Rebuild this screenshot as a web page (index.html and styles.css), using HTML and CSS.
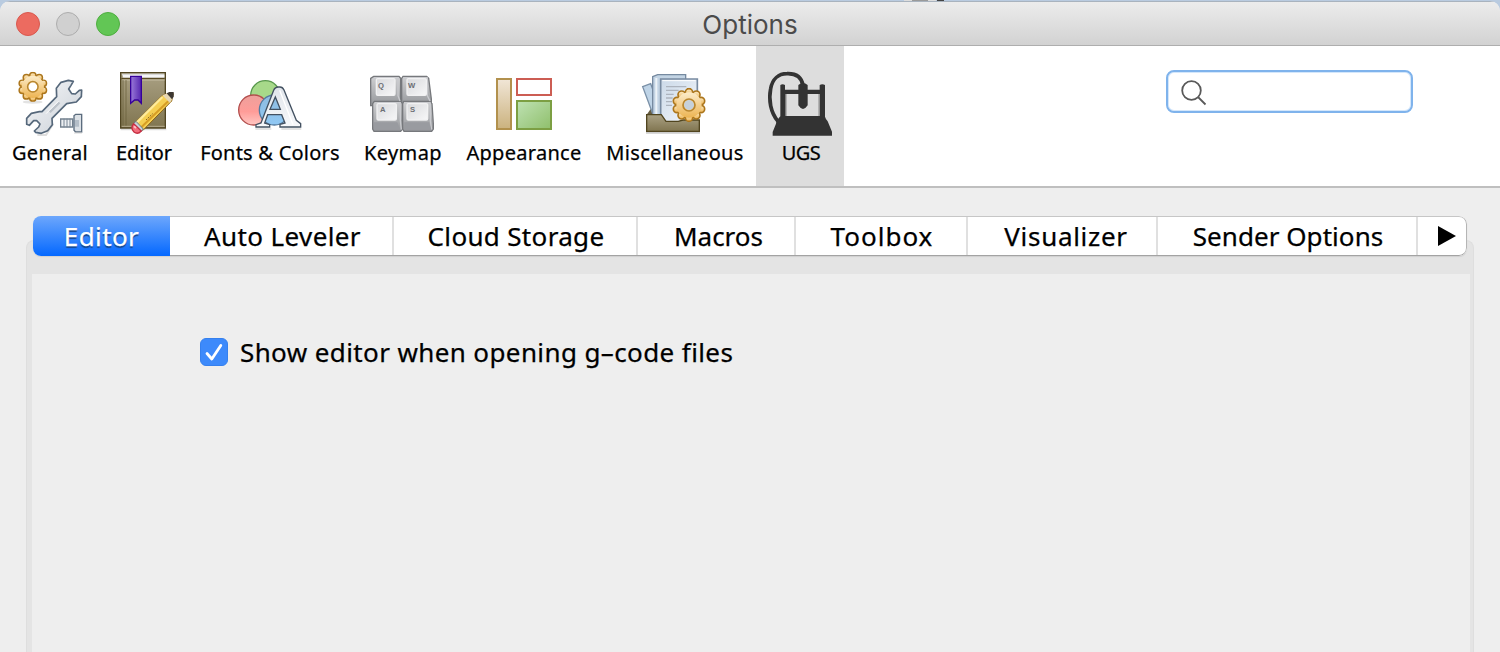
FILE: index.html
```html
<!DOCTYPE html>
<html lang="en">
<head>
<meta charset="utf-8">
<title>Options</title>
<link rel="stylesheet" href="styles.css">
</head>
<body>
<svg class="defs" aria-hidden="true">
  <defs>
    <linearGradient id="gold" x1="0" y1="0" x2="0" y2="1"><stop offset="0" stop-color="#fcecca"/><stop offset="1" stop-color="#edb452"/></linearGradient>
    <linearGradient id="steel" x1="0" y1="0" x2="1" y2="1"><stop offset="0" stop-color="#f7f8fa"/><stop offset="1" stop-color="#c9cfd6"/></linearGradient>
    <linearGradient id="letter" x1="0" y1="0" x2="0" y2="1"><stop offset="0" stop-color="#dfe4ea"/><stop offset="1" stop-color="#f8f9fb"/></linearGradient>
    <linearGradient id="book" x1="0" y1="0" x2="0" y2="1"><stop offset="0" stop-color="#aaa184"/><stop offset="1" stop-color="#807550"/></linearGradient>
    <linearGradient id="ribbon" x1="0" y1="0" x2="1" y2="0"><stop offset="0" stop-color="#9a7bd8"/><stop offset="1" stop-color="#5526b0"/></linearGradient>
    <linearGradient id="red" x1="0" y1="0" x2="0" y2="1"><stop offset="0" stop-color="#eda09c"/><stop offset=".55" stop-color="#ff9c98"/><stop offset="1" stop-color="#ffc7c3"/></linearGradient>
    <linearGradient id="blue" x1="0" y1="0" x2="0" y2="1"><stop offset="0" stop-color="#8ebce0"/><stop offset="1" stop-color="#90c8f4"/></linearGradient>
    <linearGradient id="key" x1="0" y1="0" x2="1" y2="1"><stop offset="0" stop-color="#d8d9dc"/><stop offset="1" stop-color="#f7f7f8"/></linearGradient>
    <linearGradient id="keybase" x1="0" y1="0" x2="0" y2="1"><stop offset="0" stop-color="#cfd0d2"/><stop offset="1" stop-color="#95979b"/></linearGradient>
    <linearGradient id="tan" x1="0" y1="0" x2="0" y2="1"><stop offset="0" stop-color="#f1e6d7"/><stop offset="1" stop-color="#cbb27e"/></linearGradient>
    <linearGradient id="green" x1="0" y1="0" x2="1" y2="1"><stop offset="0" stop-color="#bfe2b4"/><stop offset="1" stop-color="#8fbf6b"/></linearGradient>
    <linearGradient id="paper" x1="0" y1="0" x2="1" y2="1"><stop offset="0" stop-color="#cbd9e8"/><stop offset="1" stop-color="#f5f8fc"/></linearGradient>
    <symbol id="gear" viewBox="-52 -52 104 104">
      <g fill="url(#gold)" stroke="#ac761c" stroke-width="5">
        <circle cx="0" cy="-38" r="11"/><circle cx="22" cy="-31" r="11"/><circle cx="36" cy="-12" r="11"/><circle cx="36" cy="12" r="11"/><circle cx="22" cy="31" r="11"/>
        <circle cx="0" cy="38" r="11"/><circle cx="-22" cy="31" r="11"/><circle cx="-36" cy="12" r="11"/><circle cx="-36" cy="-12" r="11"/><circle cx="-22" cy="-31" r="11"/>
      </g>
      <path fill="url(#gold)" fill-rule="evenodd" d="M-38 0a38 38 0 1 0 76 0a38 38 0 1 0-76 0M-15 0a15 15 0 1 1 30 0a15 15 0 1 1-30 0"/>
      <circle r="18" fill="none" stroke="#b8862f" stroke-width="5"/>
    </symbol>
  </defs>
</svg>
<div class="desktop">
<main class="window">
  <header class="titlebar">
    <div class="lights"><i class="light close"></i><i class="light minimize"></i><i class="light expand"></i></div>
    <h1 class="title">Options</h1>
  </header>

  <nav class="toolbar">
    <a class="tool general">
      <svg class="icon" viewBox="24 18 192 192">
        <ellipse cx="68" cy="108" rx="30" ry="5" fill="#e3e3e3"/>
        <circle cx="68" cy="63" r="18" fill="#fff"/>
        <use href="#gear" x="23" y="17" width="91" height="91"/>
        <path d="M82 207h26l22-34" fill="none" stroke="#dedede" stroke-width="6"/>
        <path d="M140 92L139 67L153 49L175 43L190 46L183 58L176 69L185 83L196 84L208 73L215 72L214 92L199 108L170 113L126 157L127 176L113 194L94 202L77 199L73 195L86 183L90 174L80 164L71 164L58 178L50 175L50 157L64 142L88 137L96 137Z" fill="url(#steel)" stroke="#56687b" stroke-width="5" stroke-linejoin="round"/>
        <path d="M116 136l30-29 5 5-29 29z" fill="#bdc3ca"/><path d="M108 143l37-37" stroke="#fff" stroke-width="3"/>
        <path d="M152 159h36v24h-36z" fill="#eceff2" stroke="#73818f" stroke-width="4"/>
        <path d="M162 158v26M171 158v26M180 158v26" stroke="#788694" stroke-width="3"/>
        <path d="M192 149l5-4h18v53h-18l-5-5z" fill="#dce1e6" stroke="#5b6c7e" stroke-width="4"/><path d="M195 162h12v20h-12" fill="#b4bec8"/><path d="M192 201h24" stroke="#d5d5d5" stroke-width="3"/>
      </svg>
      <span class="label">General</span>
    </a>
    <a class="tool editor">
      <svg class="icon" viewBox="336 36 192 192">
        <path d="M362 208h137" stroke="#ddd" stroke-width="5"/>
        <path d="M362 38h134v166H362z" fill="url(#book)" stroke="#514623" stroke-width="4"/>
        <path d="M365 41h128v12H370z" fill="#d8d8d6"/><path d="M369 48h124" stroke="#fff" stroke-width="4"/><path d="M364 56h130" stroke="#5a4b22" stroke-width="4"/>
        <path d="M367 60h127" stroke="#c5bda4" stroke-width="3"/><path d="M369 60v138M378 60v138" stroke="#655a37" stroke-width="2"/><path d="M365 199h129" stroke="#b5ab8e" stroke-width="3"/>
        <path d="M392 49h32v81l-10-10h-10l-12 10z" fill="url(#ribbon)" stroke="#360099" stroke-width="4"/>
        <path d="M403 190L487 106L515 98L520 101L515 123L429 211Z" fill="#f5cf53" stroke="#8b6315" stroke-width="3"/>
        <path d="M410 188l77-77" stroke="#ffeb9a" stroke-width="7"/><path d="M424 202l82-80" stroke="#d79d24" stroke-width="6"/><path d="M438 180l20-19" stroke="#876324" stroke-width="3" stroke-dasharray="5 3"/>
        <path d="M487 106l17-7 14 15-8 15z" fill="#e7d7b3"/><path d="M500 100l8-4h13v14l-5 8z" fill="#3d3832"/>
        <path d="M408 184l22 23-7 8-24-23z" fill="#c7d0d6" stroke="#697783" stroke-width="3"/>
        <path d="M401 191l23 22q-11 12-22 3q-12-11-1-25z" fill="#f26e7d" stroke="#c62e42" stroke-width="4"/><path d="M402 199l6 5" stroke="#ffc4c6" stroke-width="5"/>
      </svg>
      <span class="label">Editor</span>
    </a>
    <a class="tool fonts">
      <svg class="icon" viewBox="144 36 192 192">
        <circle cx="226" cy="106" r="44" fill="#a7d98a" stroke="#58984c" stroke-width="4"/>
        <circle cx="191" cy="150" r="45" fill="url(#red)" stroke="#b34f4e" stroke-width="4"/>
        <circle cx="253" cy="150" r="45" fill="url(#blue)" stroke="#527ba0" stroke-width="4"/>
        <path d="M196 207h48M274 207h60" stroke="#dcdcdc" stroke-width="5"/>
        <path d="M198 201v-7l15-5 38-98q4-10 14-10h5q8 0 12 9l37 91 13 10v10h-62v-8l15-4-10-25h-42l-9 25 15 5v7zM240 148h31l-15-37z" fill="url(#letter)" fill-rule="evenodd" stroke="#435161" stroke-width="4"/>
        <path d="M269 91l40 103" stroke="#fff" stroke-width="4"/>
      </svg>
      <span class="label">Fonts &amp; Colors</span>
    </a>
    <a class="tool keymap">
      <svg class="icon" viewBox="543 36 192 192">
        <g fill="url(#keybase)" stroke="#76787c" stroke-width="4">
          <path d="M551 49h76l5 6v82h-90V55z"/><path d="M639 49h71l6 6 8 62v20h-89V55z"/>
          <path d="M553 124h80l4 7v76l-5 7h-80l-4-7v-76z"/><path d="M641 124h79l6 7 4 60v16l-5 7h-83l-4-7v-76z"/>
        </g>
        <path d="M552 54h72v53l6 16M640 54h72v53l8 16M556 129h75v52l3 28M644 129h77v52l4 28" fill="none" stroke="#c9cace" stroke-width="4"/>
        <g fill="url(#key)" stroke="#f1f1f2" stroke-width="4">
          <rect x="559" y="56" width="56" height="50" rx="4"/><rect x="651" y="56" width="58" height="50" rx="4"/>
          <rect x="561" y="131" width="58" height="49" rx="4"/><rect x="651" y="131" width="62" height="49" rx="4"/>
        </g>
        <path d="M552 187h70l9 22h-79zM643 187h74l7 22h-81z" fill="#999ba0"/>
        <g class="keycap"><text x="564" y="83">Q</text><text x="654" y="83">W</text><text x="570" y="156">A</text><text x="660" y="156">S</text></g>
      </svg>
      <span class="label">Keymap</span>
    </a>
    <a class="tool appearance">
      <svg class="icon" viewBox="126 36 192 192" stroke-width="6">
        <path d="M141 57h42v150h-42z" fill="url(#tan)" stroke="#b2914d"/>
        <path d="M201 57h102v48H201z" fill="#fff" stroke="#cc5d53"/>
        <path d="M201 123h102v84H201z" fill="url(#green)" stroke="#7c9f43"/>
      </svg>
      <span class="label">Appearance</span>
    </a>
    <a class="tool misc">
      <svg class="icon" viewBox="579 36 192 192">
        <path d="M588 218h162" stroke="#ccc" stroke-width="6"/>
        <path d="M590 164l12-17h141v20z" fill="#655b40"/>
        <path d="M578 80l24-9 35 95h-27z" fill="#bfd4e7" stroke="#7b91a8" stroke-width="4"/>
        <path d="M608 50l15-6h84v120h-99z" fill="#c3d4e4" stroke="#768aa0" stroke-width="4"/><path d="M619 54v108" stroke="#edf3f8" stroke-width="6"/>
        <path d="M632 57h110v130H632z" fill="url(#paper)" stroke="#788ba1" stroke-width="5"/><path d="M637 62h100" stroke="#fff" stroke-width="3"/>
        <path d="M648 80h61M648 91h38M648 103h23M648 114h20M648 125h18M648 136h18" stroke="#adb4be" stroke-width="4"/>
        <path d="M590 164h44l14 20h37l14-4h49v34H590z" fill="url(#book)" stroke="#51451f" stroke-width="4"/>
        <circle cx="717" cy="135" r="25" fill="#c6d1db"/>
        <use href="#gear" x="665" y="83" width="104" height="104"/>
      </svg>
      <span class="label">Miscellaneous</span>
    </a>
    <a class="tool ugs selected">
      <svg class="icon" viewBox="84 96 192 192" fill="#333">
        <path d="M114 244C92 218 85 180 92 146C97 117 116 101 141 101C169 100 185 112 189 136" fill="none" stroke="#333" stroke-width="11"/>
        <path d="M121 135q7-5 14 0v14h40v-14q14-12 28 0v14h36v-14q8-5 16 0v95q2 7 8 14l13 31v12H98v-11l10-25q0-8 13-22zM137 162v66h102v-66h-36v34q-14 22-28 0v-34z" fill-rule="evenodd"/>
        <path d="M138 162v66M237 162v66" stroke="#888" stroke-width="3"/>
      </svg>
      <span class="label">UGS</span>
    </a>
    <label class="search">
      <svg class="lens" viewBox="0 0 26 26"><circle cx="10.5" cy="10.5" r="9.3"/><path d="M17 17l7.5 7.5"/></svg>
      <input class="search-input" type="text" aria-label="Search">
    </label>
  </nav>

  <section class="content">
    <div class="tabs">
      <button class="tab active t1"><span>Editor</span></button>
      <button class="tab t2"><span>Auto Leveler</span></button>
      <button class="tab t3"><span>Cloud Storage</span></button>
      <button class="tab t4"><span>Macros</span></button>
      <button class="tab t5"><span>Toolbox</span></button>
      <button class="tab t6"><span>Visualizer</span></button>
      <button class="tab t7"><span>Sender Options</span></button>
      <button class="tab more" aria-label="More tabs"><svg class="arrow" viewBox="0 0 18 20"><path d="M0 0l18 10-18 10z"/></svg></button>
    </div>
    <div class="frame">
      <div class="panel">
        <label class="option">
          <svg class="check" viewBox="0 0 28 28"><rect x=".5" y=".5" width="27" height="27" rx="5.5"/><path d="M7 15.5l4.8 5.5L20.8 7.5"/></svg>
          <span class="option-text">Show editor when opening g–code files</span>
        </label>
      </div>
    </div>
  </section>
</main>
</div>
</body>
</html>
```
FILE: styles.css
```css
* { box-sizing: border-box; }
body { margin: 0; overflow: hidden; font-family: "Noto Sans", "Open Sans", sans-serif; color: #000; }
.defs { display: block; width: 0; height: 0; }
.desktop {
  height: 652px;
  padding-top: 1px;
  background: linear-gradient(#9a9a9a, #9a9a9a) 912px 0 / 16px 2px no-repeat,
    linear-gradient(#444, #444) 937px 0 / 7px 2px no-repeat,
    linear-gradient(#ddd, #ddd) 904px 0 / 32px 2px no-repeat, #b9cbe0;
}
.window { height: 651px; display: flex; flex-direction: column; border-radius: 10px 10px 0 0; overflow: hidden; background: #eee; }
.titlebar {
  height: 45px; flex: none; display: grid; grid-template-columns: 1fr auto 1fr; align-items: center;
  background: linear-gradient(#ececec, #d2d2d2); border-top: 1px solid #a9b3be; border-bottom: 1px solid #aeaeae;
}
.lights { display: flex; gap: 16px; padding-left: 16px; }
.light { width: 24px; height: 24px; border-radius: 50%; border: 1px solid; }
.close { background: #ec6b60; border-color: #d9584e; }
.minimize { background: #d0d0d0; border-color: #adadad; }
.expand { background: #62c655; border-color: #4eae3f; }
.title { margin: 0; padding-top: 3px; font: 400 26px/32px Inter, Roboto, sans-serif; letter-spacing: 0; color: #4b4b4b; }
.toolbar { height: 142px; flex: none; display: flex; background: #fff; border-bottom: 2px solid #bfbfbf; }
.tool { flex: none; display: flex; flex-direction: column; align-items: center; padding-top: 26px; }
.general { width: 100px; letter-spacing: 0.35px; }
.editor, .ugs { width: 88px; }
.fonts { width: 164px; letter-spacing: 0.23px; }
.keymap { width: 102px; letter-spacing: 0.4px; }
.appearance { width: 140px; letter-spacing: 0.3px; }
.misc { width: 162px; letter-spacing: 0.35px; }
.selected { background: #ddd; }
.ugs .label { letter-spacing: -0.6px; padding-left: 2px; }
.icon { width: 64px; height: 64px; flex: none; overflow: visible; }
.label { margin-top: 3px; font-size: 20px; line-height: 28px; white-space: nowrap; -webkit-text-stroke: 0.25px #000; }
.keycap { font: 700 23px "Liberation Sans", sans-serif; letter-spacing: 0; fill: #6c6e74; }
.search {
  display: flex; align-items: center; width: 247px; height: 43px; margin: 24px 0 0 322px; padding: 3px 0 0 13px;
  border: 2px solid #7fb3ec; border-radius: 8px; box-shadow: inset 0 0 0 1px #d4e7fb;
}
.lens { width: 26px; height: 26px; flex: none; fill: none; stroke: #595959; stroke-width: 1.8; }
.search-input { flex: 1; min-width: 0; height: 30px; border: 0; outline: 0; background: transparent; font-size: 22px; }
.content { flex: 1; padding: 28px 26px 0; display: flex; flex-direction: column; }
.tabs {
  position: relative; z-index: 1; width: 1434px; height: 40px; flex: none; display: flex; margin-left: 7px;
  background: #fff; border-radius: 8px; overflow: hidden; box-shadow: 0 1px 1px #d0d0d0;
}
.tab {
  display: flex; align-items: center; justify-content: center; padding: 0 0 1px; border: solid #c6c6c6; border-width: 1px 0;
  border-bottom-color: #a3a3a3; background: linear-gradient(#e0e0e0, #e0e0e0) right / 2px 100% no-repeat #fff;
  font: 26px/36px "Noto Sans", sans-serif; color: #000; white-space: nowrap; -webkit-text-stroke: 0.25px;
}
.active { background: linear-gradient(#6da7fc, #0468ff); border: 0; color: #fff; text-shadow: 0 2px 1px #174890; }
.t1 { width: 137px; letter-spacing: 0.4px; }
.t2 { width: 224px; padding-left: 1px; letter-spacing: 0.38px; }
.t3 { width: 244px; letter-spacing: 0.33px; }
.t4 { width: 158px; padding-left: 3px; }
.t5 { width: 172px; letter-spacing: 1px; }
.t6 { width: 190px; padding-left: 6px; letter-spacing: 0.7px; }
.t7 { width: 260px; letter-spacing: 0.05px; }
.more { width: 49px; padding-left: 9px; background: #fff; border-right: 1px solid #b5b5b5; border-radius: 0 8px 8px 0; }
.arrow { width: 18px; height: 20px; }
.frame { flex: 1; margin-top: -16px; padding: 33px 3px 0 5px; background: #e4e4e4; border: 1px solid #dedede; border-bottom: 0; border-radius: 8px 8px 0 0; }
.panel { height: 100%; padding: 64px 0 0 168px; background: #eee; }
.option { display: flex; align-items: center; gap: 12px; height: 28px; }
.check { width: 28px; height: 28px; flex: none; }
.check rect { fill: #3d8afb; stroke: #3580ee; }
.check path { fill: none; stroke: #fff; stroke-width: 2.8; stroke-linecap: round; stroke-linejoin: round; }
.option-text { font-size: 26px; line-height: 36px; letter-spacing: 0.39px; white-space: nowrap; -webkit-text-stroke: 0.25px #000; }
```
